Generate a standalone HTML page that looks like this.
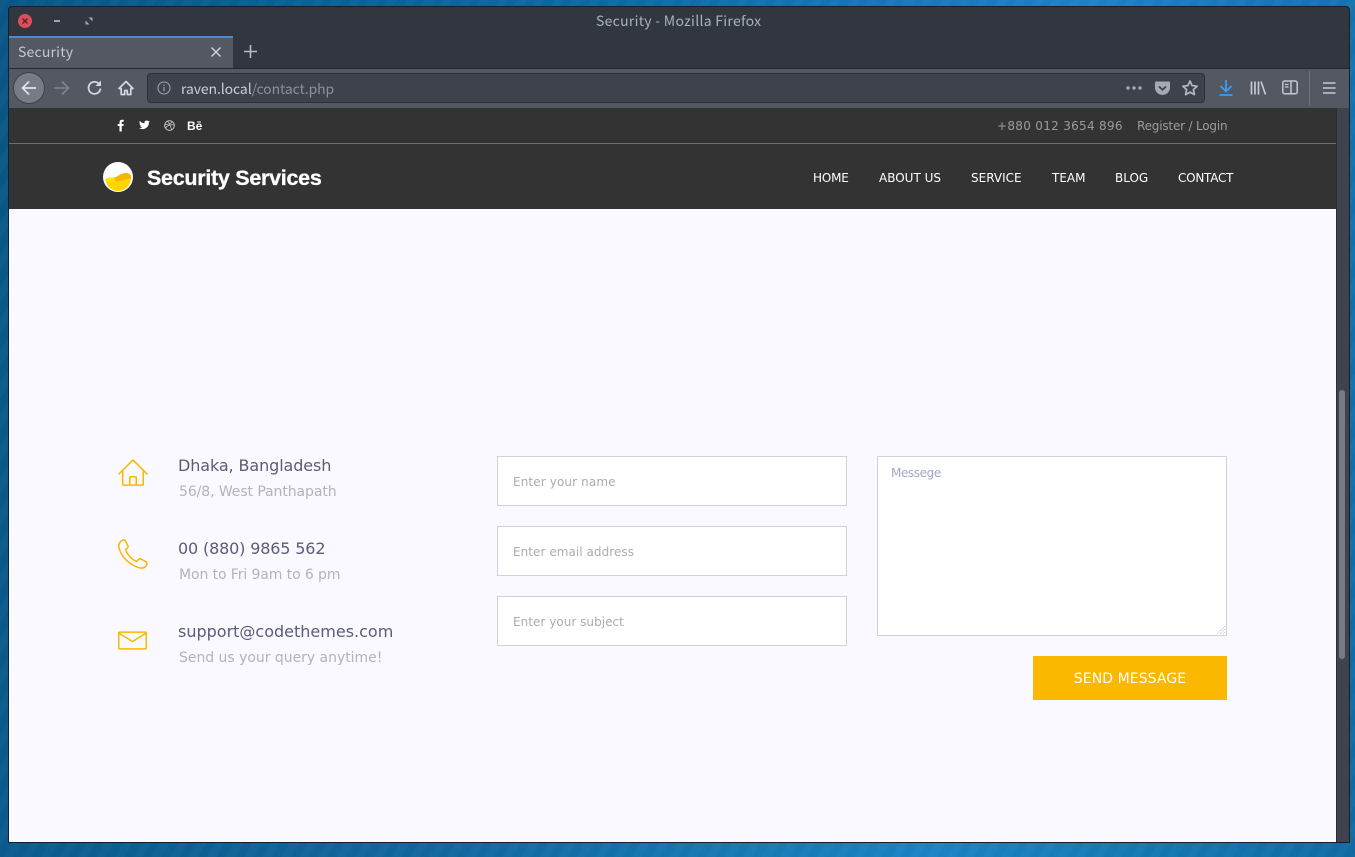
<!DOCTYPE html>
<html><head><meta charset="utf-8"><title>Security</title>
<style>
html,body{margin:0;padding:0;width:1355px;height:857px;overflow:hidden;background:#0f6ba3;}
*{box-sizing:border-box;}
.a{position:absolute;white-space:nowrap;}
body{font-family:"DejaVu Sans",sans-serif;position:relative;}
.ui{font-family:"Noto Sans CJK JP","DejaVu Sans",sans-serif;}
.inp{position:absolute;background:#fff;border:1px solid #cfd1db;}
.ph{font-size:12px;color:#aeaab0;letter-spacing:.05px;}
.nav{font-size:12px;color:#fff;top:170px;line-height:16px;}
.t{font-size:16px;color:#5a5c78;line-height:20px;}
.s{font-size:14px;color:#b1b3bd;line-height:18px;}
</style></head><body>
<div class="a" style="left:0;top:0;width:1355px;height:857px;background:repeating-linear-gradient(120deg,rgba(255,255,255,.018) 0 8px,rgba(0,0,0,.012) 8px 16px),linear-gradient(100deg,#0a5787 0,#11689f 40%,#1a84c4 72%,#0f6ba3 100%)"></div>
<div class="a" style="left:8px;top:6px;width:1342px;height:837px;background:#31363f;border:1px solid #14202b;border-radius:4px 4px 0 0"></div>

<!-- title bar -->
<div class="a" style="left:18px;top:14px;width:14px;height:14px;border-radius:50%;background:#d9505a"></div>
<svg class="a" style="left:18px;top:14px" width="14" height="14"><path d="M4.500 4.500l5 5M9.500 4.500l-5 5" stroke="#5a2530" stroke-width="1.500"/></svg>
<div class="a" style="left:54px;top:20px;width:6px;height:2px;background:#a2a6ad"></div>
<svg class="a" style="left:85px;top:17px" width="8" height="8"><path d="M3.500 0.500h4v4zM.5 3.500v4h4z" fill="#a2a6ad"/></svg>
<div class="a ui" style="left:596px;top:11px;font-size:14px;line-height:20px;color:#a6b3c1;letter-spacing:.28px">Security - Mozilla Firefox</div>

<!-- tab -->
<div class="a" style="left:9px;top:36px;width:224px;height:32px;background:#535862;border-top:2px solid #4a8ad4"></div>
<div class="a ui" style="left:18px;top:42px;font-size:14px;line-height:20px;color:#c2cbd5;letter-spacing:.2px">Security</div>
<svg class="a" style="left:210px;top:46px" width="12" height="12"><path d="M1.500 1.500l9 9M10.500 1.500l-9 9" stroke="#d0d3d8" stroke-width="1.500"/></svg>
<svg class="a" style="left:243px;top:44px" width="15" height="15"><path d="M7.500 1v13M1 7.500h13" stroke="#b8bcc3" stroke-width="1.600"/></svg>

<!-- toolbar -->
<div class="a" style="left:9px;top:68px;width:1340px;height:40px;background:#535862;border-top:1px solid #23272e"></div>
<div class="a" style="left:13px;top:72px;width:32px;height:32px;border-radius:50%;background:#777b85;border:1px solid #3e424b"></div>
<svg class="a" style="left:20px;top:79px" width="18" height="18"><path d="M16 9H2.500M9 2.500L2.500 9 9 15.500" fill="none" stroke="#e2e4e8" stroke-width="1.700"/></svg>
<svg class="a" style="left:53px;top:79px" width="18" height="18"><path d="M1 9h14M9 2.500L15.500 9 9 15.500" fill="none" stroke="#80848d" stroke-width="1.600"/></svg>
<svg class="a" style="left:86px;top:79px" width="17" height="17"><path d="M13.500 5.500A6 6 0 1 0 14.500 9.500" fill="none" stroke="#d5d8dd" stroke-width="1.800"/><path d="M15 1.500v5.500h-5.500z" fill="#d5d8dd"/></svg>
<svg class="a" style="left:118px;top:80px" width="16" height="16"><path d="M8 1.500L1 8.500h2.200v6h3.500v-4h2.600v4h3.500v-6H15z" fill="none" stroke="#d5d8dd" stroke-width="1.700" stroke-linejoin="round"/></svg>

<div class="a" style="left:147px;top:73px;width:1058px;height:30px;background:#3d424d;border:1px solid #2c3038;border-radius:4px"></div>
<svg class="a" style="left:157px;top:81px" width="14" height="14"><circle cx="7" cy="7" r="6" fill="none" stroke="#a0a4ac" stroke-width="1"/><path d="M7 6v4.200M7 3.600v1.300" stroke="#a0a4ac" stroke-width="1.200"/></svg>
<div class="a ui" style="left:181px;top:79px;font-size:14px;line-height:20px;color:#c6ced8;letter-spacing:-.1px">raven.local<span style="color:#8b909a">/contact.php</span></div>
<svg class="a" style="left:1125px;top:85px" width="18" height="6"><circle cx="3" cy="3" r="1.700" fill="#a5a9b0"/><circle cx="9" cy="3" r="1.700" fill="#a5a9b0"/><circle cx="15" cy="3" r="1.700" fill="#a5a9b0"/></svg>
<svg class="a" style="left:1154px;top:81px" width="17" height="15"><path d="M1 1.500a1 1 0 0 1 1-1h13a1 1 0 0 1 1 1v5a7.500 7.500 0 0 1-15 0z" fill="#a5a9b0"/><path d="M5 5.500l3.500 3.300L12 5.500" fill="none" stroke="#3d424d" stroke-width="1.800"/></svg>
<svg class="a" style="left:1181px;top:79px" width="18" height="18"><path d="M9 2l2.100 4.600 5 .6-3.700 3.400 1 5L9 13.100l-4.400 2.500 1-5L1.900 7.200l5-.6z" fill="none" stroke="#b4b8be" stroke-width="1.700" stroke-linejoin="round"/></svg>
<svg class="a" style="left:1218px;top:79px" width="16" height="18"><path d="M8 1v11M2.500 7L8 12.500 13.500 7" fill="none" stroke="#3b9cf5" stroke-width="1.800"/><path d="M1.500 16h13" stroke="#3b9cf5" stroke-width="1.800"/></svg>
<svg class="a" style="left:1250px;top:80px" width="17" height="16"><path d="M1.500 1.500v13M5 1.500v13M8.500 1.500v13M11 1.500l4.500 13" fill="none" stroke="#c4c7cd" stroke-width="1.700"/></svg>
<svg class="a" style="left:1282px;top:80px" width="16" height="15"><rect x=".8" y="1" width="14.400" height="12.800" rx="2" fill="none" stroke="#c4c7cd" stroke-width="1.500"/><path d="M9 1v12.500" stroke="#c4c7cd" stroke-width="1.500"/><path d="M3 4.500h3.500M3 7h3.500" stroke="#c4c7cd" stroke-width="1.200"/></svg>
<div class="a" style="left:1309px;top:71px;width:1px;height:34px;background:#70747d"></div>
<svg class="a" style="left:1323px;top:82px" width="13" height="12"><path d="M0 1h12.500M0 6h12.500M0 11h12.500" stroke="#c8cbd0" stroke-width="1.600"/></svg>

<!-- page -->
<div class="a" style="left:9px;top:108px;width:1327px;height:734px;background:#f9f9ff;overflow:hidden"></div>
<div class="a" style="left:9px;top:108px;width:1327px;height:101px;background:#333333"></div>
<div class="a" style="left:9px;top:143px;width:1327px;height:1px;background:#6e6e6e"></div>
<div class="a" style="left:1336px;top:108px;width:13px;height:734px;background:#3e434e;border-left:1px solid #2a2e36"></div>
<div class="a" style="left:1339px;top:390px;width:6px;height:269px;border-radius:3px;background:#777b86"></div>

<!-- socials -->
<svg class="a" style="left:117px;top:119px" width="8" height="13" viewBox="0 0 8 13"><path d="M2.500 12.500V7H.7V5h1.800V3.500C2.500 1.700 3.500 .8 5 .8h1.700v2H5.600c-.6 0-.9.300-.9.900V5h2l-.3 2H4.700v5.500z" fill="#fff"/></svg>
<svg class="a" style="left:139px;top:120px" width="11" height="10" viewBox="0 0 24 20"><path d="M24 2.400c-.9.400-1.800.7-2.800.8 1-.6 1.800-1.600 2.200-2.700-1 .6-2 1-3.100 1.200A4.900 4.900 0 0 0 12 6.200C7.900 6 4.300 4 1.700.9c-1.300 2.300-.6 5.100 1.500 6.500-.8 0-1.600-.2-2.200-.6 0 2.300 1.600 4.400 3.900 4.900-.7.200-1.500.2-2.200.1.600 2 2.400 3.400 4.600 3.400A9.900 9.900 0 0 1 0 16.700 14 14 0 0 0 21.500 4.300c1-.7 1.800-1 2.500-1.900z" fill="#fff"/></svg>
<svg class="a" style="left:164px;top:120px" width="11" height="11" viewBox="0 0 11 11"><circle cx="5.500" cy="5.500" r="4.800" fill="none" stroke="#d5d5d5" stroke-width=".9"/><path d="M3.500 1.200c2 2.200 3.500 5.200 4 8.800M1 4.500c3 .2 5.500-.6 7.500-2.700M1.500 8c1.800-2.500 4.500-3.800 8.800-3" fill="none" stroke="#d5d5d5" stroke-width=".7"/></svg>
<div class="a" style="left:187px;top:118px;font-family:'Liberation Sans',sans-serif;font-weight:700;font-size:12px;line-height:16px;color:#fff">Bē</div>
<div class="a" style="left:997px;top:118px;font-size:12px;line-height:17px;color:#9b9b9b;letter-spacing:.3px">+880 012 3654 896</div>
<div class="a" style="left:1137px;top:118px;font-size:12px;line-height:17px;color:#9b9b9b;letter-spacing:-.19px">Register / Login</div>

<!-- logo -->
<svg class="a" style="left:103px;top:162px" width="30" height="30" viewBox="0 0 30 30"><circle cx="15" cy="15" r="15" fill="#fff"/><path d="M2.500 17c3-1.500 6-2 9-1.500 3 .5 5.500-4.500 11-4.500 2.500 0 4.500.8 5.300 2.500C29 23 22 29 15 29 8 29 2.800 23 2.500 17z" fill="#ffd400"/><path d="M2.600 17.500c3-2 6-2.500 8.900-2l2 4.500c-4-.5-7.500-1-10.500.5z" fill="#ffe600"/><path d="M11 15.500c3.500 0 6-4.500 11.500-4.500 2.500 0 4.500.8 5.300 2.500l.2 3.500c-4.500-.5-7.500 1-10.500 2-2 .6-4 .5-5 .3z" fill="#f6b700"/></svg>
<div class="a" style="left:147px;top:164px;font-family:'Liberation Sans',sans-serif;font-weight:700;font-size:21.500px;line-height:28px;color:#fff;letter-spacing:-.28px;-webkit-text-stroke:.3px #fff">Security Services</div>

<!-- nav -->
<div class="a nav" style="left:813px;letter-spacing:-.2px">HOME</div>
<div class="a nav" style="left:879px">ABOUT US</div>
<div class="a nav" style="left:971px">SERVICE</div>
<div class="a nav" style="left:1052px">TEAM</div>
<div class="a nav" style="left:1115px">BLOG</div>
<div class="a nav" style="left:1178px;letter-spacing:-.25px">CONTACT</div>

<!-- contact info -->
<svg class="a" style="left:118px;top:459px" width="30" height="28" viewBox="0 0 32 30" fill="none" stroke="#fab700" stroke-width="1.600" stroke-linejoin="round" stroke-linecap="round"><path d="M1 16L16 1l15 15"/><path d="M5 12.500V27a1 1 0 0 0 1 1h20a1 1 0 0 0 1-1V12.500"/><path d="M12.500 28v-8a1 1 0 0 1 1-1h5a1 1 0 0 1 1 1v8"/></svg>
<div class="a t" style="left:178px;top:456px;letter-spacing:-.1px">Dhaka, Bangladesh</div>
<div class="a s" style="left:179px;top:483px;letter-spacing:-.08px">56/8, West Panthapath</div>

<svg class="a" style="left:118px;top:539px" width="30" height="30" viewBox="0 0 32 32" fill="none" stroke="#fab700" stroke-width="1.600" stroke-linejoin="round"><path d="M2 3.500C3.500 1.500 6 .5 7.500 1.500l3 5.500c.5 1 .3 2-.5 2.700L8 11.500c1.500 4.500 7.500 11 12 12.500l2-2.300c.8-.8 1.700-.9 2.700-.4l5.500 3.300c1.200.8 1 3-1 5C27 31.500 24 31.500 20 29.800 11 26 4 19 1.500 11 .5 8 .5 5.500 2 3.500z"/></svg>
<div class="a t" style="left:178px;top:539px;letter-spacing:-.15px">00 (880) 9865 562</div>
<div class="a s" style="left:179px;top:566px;letter-spacing:-.1px">Mon to Fri 9am to 6 pm</div>

<svg class="a" style="left:118px;top:631px" width="29" height="19" viewBox="0 0 30 19" fill="none" stroke="#fab700" stroke-width="1.500" stroke-linejoin="round" stroke-linecap="round"><rect x=".8" y=".8" width="28.400" height="17.400" rx="1"/><path d="M1 2l14 8.500L29 2"/></svg>
<div class="a t" style="left:178px;top:622px;letter-spacing:0">support@codethemes.com</div>
<div class="a s" style="left:179px;top:649px;letter-spacing:-.03px">Send us your query anytime!</div>

<!-- form -->
<div class="inp" style="left:497px;top:456px;width:350px;height:50px"></div>
<div class="a ph" style="left:513px;top:474px;line-height:17px;letter-spacing:.12px">Enter your name</div>
<div class="inp" style="left:497px;top:526px;width:350px;height:50px"></div>
<div class="a ph" style="left:513px;top:544px;line-height:17px">Enter email address</div>
<div class="inp" style="left:497px;top:596px;width:350px;height:50px"></div>
<div class="a ph" style="left:513px;top:614px;line-height:17px;letter-spacing:.03px">Enter your subject</div>
<div class="inp" style="left:877px;top:456px;width:350px;height:180px"></div>
<div class="a ph" style="left:891px;top:465px;line-height:17px;color:#a0a9c0;letter-spacing:-.4px">Messege</div>
<svg class="a" style="left:1216px;top:625px" width="10" height="10"><path d="M9 1L1 9M9 4L4 9M9 7L7 9" stroke="#b9bbc4" stroke-width="1" stroke-dasharray="1 1"/></svg>
<div class="a" style="left:1033px;top:656px;width:194px;height:44px;background:#fbb800;color:#fff;font-size:14px;line-height:46px;text-align:center;letter-spacing:.08px">SEND MESSAGE</div>
</body></html>
